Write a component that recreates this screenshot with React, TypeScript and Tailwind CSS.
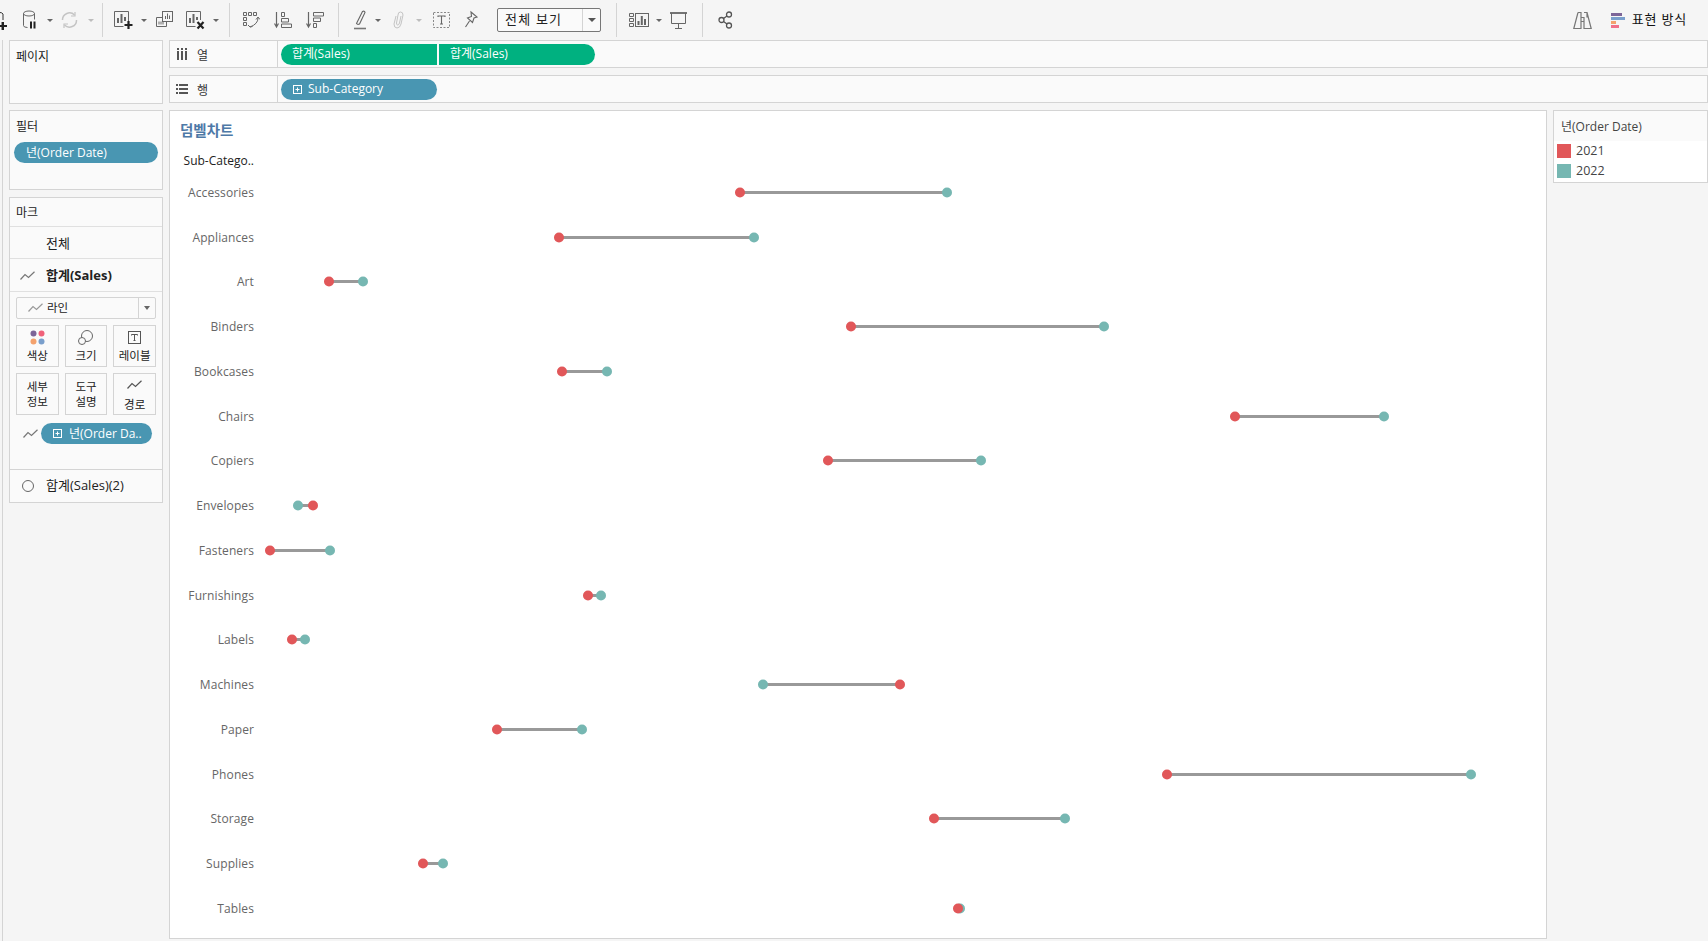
import type { ReactNode } from 'react';

const ROWS: { label: string; a: number; b: number }[] = [
  { label: 'Accessories', a: 740, b: 947 },
  { label: 'Appliances', a: 559, b: 754 },
  { label: 'Art', a: 329, b: 363 },
  { label: 'Binders', a: 851, b: 1104 },
  { label: 'Bookcases', a: 562, b: 607 },
  { label: 'Chairs', a: 1235, b: 1384 },
  { label: 'Copiers', a: 828, b: 981 },
  { label: 'Envelopes', a: 313, b: 298 },
  { label: 'Fasteners', a: 270, b: 330 },
  { label: 'Furnishings', a: 588, b: 601 },
  { label: 'Labels', a: 292, b: 305 },
  { label: 'Machines', a: 900, b: 763 },
  { label: 'Paper', a: 497, b: 582 },
  { label: 'Phones', a: 1167, b: 1471 },
  { label: 'Storage', a: 934, b: 1065 },
  { label: 'Supplies', a: 423, b: 443 },
  { label: 'Tables', a: 958, b: 960 },
];

const PLOT_LEFT = 255;

const Caret = ({ className = 'ml-[11px]', light = false }: { className?: string; light?: boolean }) => (
  <span
    className={`${className} h-0 w-0 border-x-[3px] border-t-[3px] border-x-transparent ${
      light ? 'border-t-[#bdbdbd]' : 'border-t-[#666666]'
    }`}
  />
);

const Sep = ({ className }: { className: string }) => <span className={`${className} h-[34px] w-px bg-[#d4d4d4]`} />;

const Ico = ({ w, h = 20, className = '', children }: { w: number; h?: number; className?: string; children: ReactNode }) => (
  <svg width={w} height={h} viewBox={`0 0 ${w} ${h}`} fill="none" stroke="#666" strokeWidth="1" className={`shrink-0 ${className}`}>
    {children}
  </svg>
);

const LineGlyph = ({ stroke = '#777' }: { stroke?: string }) => (
  <svg width="15" height="10" viewBox="0 0 15 10" fill="none" stroke={stroke} strokeWidth="1.2">
    <path d="M0.5 8.5 L5 3.5 L8.5 6.5 L14.5 0.8" />
  </svg>
);

const PlusBox = () => (
  <svg width="11" height="11" viewBox="0 0 11 11" fill="none" stroke="#fff" strokeWidth="1" className="shrink-0">
    <rect x="1.5" y="1.5" width="8" height="8" />
    <path d="M3.5 5.5h4M5.5 3.5v4" />
  </svg>
);

const Toolbar = () => (
  <div className="flex h-[40px] shrink-0 items-center bg-[#f5f5f5]">
    <div className="w-[7px] shrink-0 overflow-hidden">
      <Ico w={7} className="relative top-[1px]">
        <path d="M-5 3 Q1 0 3 3 V9 M-2 15h8M2 11v8" stroke="#333" />
        <path d="M-1 15h8M3 11v8" stroke="#222" strokeWidth="2" />
      </Ico>
    </div>
    <Ico w={13} h={20} className="ml-[16px]">
      <ellipse cx="6" cy="3.5" rx="5.5" ry="2.5" />
      <path d="M.5 3.5v12q0 2 4 2M11.5 3.5v6" />
      <path d="M8 11.5v7M11.5 11.5v7" stroke="#222" strokeWidth="2" />
    </Ico>
    <Caret className="ml-[11px]" />
    <Ico w={17} h={18} className="ml-[8px]">
      <path d="M1.5 9a7 7 0 0 1 12-5M15.5 9a7 7 0 0 1-12 5" stroke="#c4c4c4" strokeWidth="1.5" />
      <path d="M14 1v4h-4M3 17v-4h4" stroke="#c4c4c4" strokeWidth="1.2" />
    </Ico>
    <Caret className="ml-[10px]" light />
    <Sep className="ml-[8px]" />

    <Ico w={19} className="ml-[11px]">
      <path d="M14.5 12V1.5H.5v15h9" />
      <path d="M4 13V8M7.5 13V4M11 11V7" strokeWidth="2" />
      <path d="M14.5 11v8M10.5 15h8" stroke="#222" strokeWidth="2.2" />
    </Ico>
    <Caret className="ml-[8px]" />
    <Ico w={17} className="ml-[9px]">
      <rect x="6.5" y="1.5" width="10" height="10" />
      <path d="M9.5 9V6M11.5 9V3.5M13.5 9V5.5" />
      <path d="M6.5 7.5H.5v9h10v-5" />
      <path d="M3 14.5v-3M5 14.5v-3M7 14.5v-3" />
    </Ico>
    <Ico w={19} className="ml-[13px]">
      <path d="M14.5 10V1.5H.5v15h9" />
      <path d="M4 13V8M7.5 13V4M11 10V7" strokeWidth="2" />
      <path d="M11.5 12l6 6.5M17.5 12l-6 6.5" stroke="#222" strokeWidth="2.2" />
    </Ico>
    <Caret className="ml-[8px]" />
    <Sep className="ml-[10px]" />

    <Ico w={17} className="ml-[13px]">
      <path d="M.5 2.5h3v3h-3zM5.5 2.5h3v3h-3zM10.5 2.5h3v3h-3zM.5 7.5h3v3h-3zM.5 12.5h3v3h-3z" />
      <path d="M15 8q0 6-8 9M13 9.5l2-2.5 2 2.500M5 15l2 2 2.500-.5" />
    </Ico>
    <Ico w={18} className="ml-[14px]">
      <path d="M2.500 2v15M.5 13.500l2 3.500 2-3.500" strokeWidth="1.200" />
      <path d="M7.500 2.500h3v4h-3zM7.500 8.500h7v3.500h-7zM7.500 14h10v3.500h-10z" />
    </Ico>
    <Ico w={18} className="ml-[14px]">
      <path d="M2.500 2v15M.5 13.500l2 3.500 2-3.500" strokeWidth="1.200" />
      <path d="M7.500 2.500h10v3.500h-10zM7.500 8h7v3.500h-7zM7.500 13.500h3v4h-3z" />
    </Ico>
    <Sep className="ml-[14px]" />

    <Ico w={12} className="ml-[15px]">
      <path d="M3 12.500 L8.500 1.500q2-1 2.500 1L5.500 14q-2 1-3-.5z" strokeWidth="1.100" />
      <path d="M0 18.500h12" stroke="#777" strokeWidth="1.600" />
    </Ico>
    <Caret className="ml-[9px]" />
    <Ico w={12} className="ml-[11px]">
      <path d="M4 6L2 14q0 4 3 4t4-4l2-9q0-3-2.500-3T6 5L4.500 13q0 2 1.200 2T7.500 13l1.500-7" stroke="#c4c4c4" />
    </Ico>
    <Caret className="ml-[12px]" light />
    <Ico w={17} className="ml-[11px]">
      <rect x=".5" y="2.500" width="16" height="15" strokeDasharray="2 1.500" stroke="#888" />
      <path d="M5 7V6h7v1M8.500 6v8M7 14h3" strokeWidth="1.100" />
    </Ico>
    <Ico w={14} className="ml-[15px]">
      <path d="M6 2l6 5-3 1-1.500 4.500L2.500 8 6.500 6.500zM4.500 11L.5 17" strokeWidth="1.100" />
    </Ico>
    <div className="ml-[18px] flex h-[24px] w-[104px] shrink-0 items-center rounded-[2px] border border-[#777777] bg-[#fafafa]">
      <span className="flex-1 pl-[7px] text-[13px] tracking-[1.2px] text-[#222]">전체 보기</span>
      <span className="flex h-full w-[18px] items-center justify-center border-l border-[#d4d4d4]">
        <span className="h-0 w-0 border-x-[4px] border-t-[4px] border-x-transparent border-t-[#555]" />
      </span>
    </div>
    <Sep className="ml-[15px]" />

    <Ico w={20} className="ml-[12px]">
      <path d="M.5 3.500h4v3h-4zM.5 8.500h4v3h-4zM.5 13.500h4v3h-4z" />
      <rect x="6.500" y="3.500" width="13" height="13" />
      <path d="M9.500 15v-4M12.800 15V6M16 15v-6" strokeWidth="2" />
    </Ico>
    <Caret className="ml-[7px]" />
    <Ico w={17} className="ml-[8px]">
      <path d="M0 3h17" strokeWidth="1.800" />
      <path d="M1.500 3v10.500h14V3M8.500 13.500V18M5 18.500h7" />
    </Ico>
    <Sep className="ml-[15px]" />
    <Ico w={15} className="ml-[15px]">
      <g stroke="#555" strokeWidth="1.300">
        <circle cx="11" cy="4.500" r="2.500" />
        <circle cx="3.500" cy="10" r="2.500" />
        <circle cx="11" cy="15.500" r="2.500" />
        <path d="M5.500 8.500l3.500-2.500M5.500 11.500l3.500 2.500" />
      </g>
    </Ico>

    <div className="ml-auto flex items-center pr-[21px]">
      <Ico w={19} h={20}>
        <path d="M5 2.500h3v5M11 2.500h3v5M8 7.500h3v4H8M5 2.500L.8 18.500H8V7.500M14 2.500l4.200 16H11V7.500" strokeWidth="1.200" stroke="#777" />
      </Ico>
      <svg width="14" height="16" viewBox="0 0 14 16" className="ml-[19px] shrink-0">
        <rect x="0" y="1" width="11" height="3" fill="#7d6598" />
        <rect x="0" y="5" width="14" height="3" fill="#7a9fcc" />
        <rect x="0" y="9" width="5" height="3" fill="#f4a26e" />
        <rect x="0" y="13" width="8" height="3" fill="#f0708a" />
      </svg>
      <span className="ml-[7px] text-[13px] tracking-[0.8px] text-[#111]">표현 방식</span>
    </div>
  </div>
);

const Pill = ({ color, className, children }: { color: string; className: string; children: ReactNode }) => (
  <div className={`flex h-[21px] shrink-0 items-center text-[12px] text-white ${color} ${className}`}>{children}</div>
);

const Shelf = ({ icon, label, children }: { icon: ReactNode; label: string; children: ReactNode }) => (
  <div className="flex h-[28px] border border-[#d4d4d4] bg-[#fafafa]">
    <div className="flex w-[108px] shrink-0 items-center border-r border-[#d4d4d4] pl-[2px] text-[12px] text-[#333]">
      <span className="flex w-[19px] justify-center">{icon}</span>
      <span className="ml-[6px] pt-[3px]">{label}</span>
    </div>
    <div className="flex items-center pl-[3px]">{children}</div>
  </div>
);

const MarkCard = ({ icon, lines, dy = false }: { icon?: ReactNode; lines: string[]; dy?: boolean }) => (
  <div className="flex h-[42px] flex-col items-center justify-center border border-[#d4d4d4] bg-[#fafafa] text-[11.500px] leading-[15px] text-[#222]">
    {icon && <span className={`flex h-[17px] items-center ${dy ? 'mb-[3px]' : 'mb-[2px]'}`}>{icon}</span>}
    {lines.map((l) => (
      <span key={l}>{l}</span>
    ))}
  </div>
);

const Sidebar = () => (
  <div className="flex w-[154px] shrink-0 flex-col gap-[6px]">
    <div className="h-[64px] border border-[#d4d4d4] bg-[#fafafa] px-[6px] pt-[7px] text-[12px] text-[#222]">페이지</div>

    <div className="h-[80px] border border-[#d4d4d4] bg-[#fafafa] pt-[7px] text-[12px] text-[#222]">
      <div className="px-[6px]">필터</div>
      <Pill color="bg-[#4996b2]" className="mx-[4px] mt-[6px] w-[144px] rounded-full pl-[12px]">
        년(Order Date)
      </Pill>
    </div>

    <div className="mt-px flex h-[306px] flex-col border border-[#d4d4d4] bg-[#fafafa] text-[12px] text-[#222]">
      <div className="flex h-[29px] shrink-0 items-center border-b border-[#e0e0e0] px-[6px] pt-[2px]">마크</div>
      <div className="flex h-[32px] shrink-0 items-center border-b border-[#e0e0e0] pl-[36px] pt-[2px] text-[13px]">전체</div>
      <div className="flex h-[33px] shrink-0 items-center border-b border-[#e0e0e0] pl-[10px] pt-[2px] text-[13px] font-bold">
        <LineGlyph />
        <span className="ml-[11px]">합계(Sales)</span>
      </div>

      <div className="mx-[6px] mt-[5px] flex h-[22px] shrink-0 items-center rounded-[2px] border border-[#d4d4d4] bg-[#fafafa]">
        <span className="ml-[11px]">
          <LineGlyph stroke="#999" />
        </span>
        <span className="ml-[4px] flex-1 text-[11.500px]">라인</span>
        <span className="flex h-full w-[17px] items-center justify-center border-l border-[#d4d4d4]">
          <span className="h-0 w-0 border-x-[3.500px] border-t-[4px] border-x-transparent border-t-[#666]" />
        </span>
      </div>

      <div className="mx-[6px] mt-[6px] grid shrink-0 grid-cols-3 gap-x-[6px] gap-y-[6px]">
        <MarkCard
          lines={['색상']}
          icon={
            <svg width="15" height="15" viewBox="0 0 15 15">
              <circle cx="3.500" cy="3.500" r="3" fill="#7d6598" />
              <circle cx="11.500" cy="3.500" r="3" fill="#f0627a" />
              <circle cx="3.500" cy="11.500" r="3" fill="#f4a26e" />
              <circle cx="11.500" cy="11.500" r="3" fill="#7a9fcc" />
            </svg>
          }
        />
        <MarkCard
          lines={['크기']}
          icon={
            <svg width="15" height="15" viewBox="0 0 15 15" fill="none" stroke="#666">
              <circle cx="9" cy="6" r="5.500" />
              <circle cx="4" cy="11" r="3.500" fill="#fafafa" />
            </svg>
          }
        />
        <MarkCard
          lines={['레이블']}
          icon={
            <svg width="13" height="13" viewBox="0 0 13 13" fill="none" stroke="#555">
              <rect x=".5" y=".5" width="12" height="12" />
              <path d="M3.500 4.500v-1h6v1M6.500 3.500v6M5.500 9.500h2" />
            </svg>
          }
        />
        <MarkCard lines={['세부', '정보']} />
        <MarkCard lines={['도구', '설명']} />
        <MarkCard lines={['경로']} dy icon={<LineGlyph stroke="#555" />} />
      </div>

      <div className="mt-[8px] flex shrink-0 items-center pl-[13px]">
        <LineGlyph />
        <Pill color="bg-[#4996b2]" className="ml-[3px] w-[111px] gap-[6px] rounded-full pl-[11px]">
          <PlusBox />
          <span>년(Order Da..</span>
        </Pill>
      </div>

      <div className="mt-auto flex h-[33px] shrink-0 items-center border-t border-[#d4d4d4] pl-[12px] text-[13px]">
        <span className="h-[12px] w-[12px] rounded-full border border-[#666]" />
        <span className="ml-[12px]">합계(Sales)(2)</span>
      </div>
    </div>
  </div>
);

const DumbbellRow = ({ label, a, b }: { label: string; a: number; b: number }) => (
  <div className="flex h-[44.750px] items-center">
    <span className="w-[85px] shrink-0 pr-px text-right text-[12px] tracking-[0.1px] text-[#666]">{label}</span>
    <svg className="h-[20px] flex-1" viewBox="0 0 1291 20">
      <line x1={a - PLOT_LEFT} x2={b - PLOT_LEFT} y1="9.500" y2="9.500" stroke="#999999" strokeWidth="3" />
      <circle cx={b - PLOT_LEFT} cy="9.500" r="5" fill="#76b7b2" />
      <circle cx={a - PLOT_LEFT} cy="9.500" r="5" fill="#e15759" />
    </svg>
  </div>
);

const Chart = () => (
  <div className="flex h-[829px] min-w-0 flex-1 flex-col border border-[#d4d4d4] bg-white">
    <div className="h-[59.500px] shrink-0 pl-[10px]">
      <div className="pt-[9px] text-[14.500px] font-bold leading-[22px] text-[#4e79a7]">덤벨차트</div>
      <div className="mt-[11px] ml-[-9px] w-[84px] pr-px text-right text-[12px] font-medium leading-[16px] text-[#222]">
        Sub-Catego..
      </div>
    </div>
    {ROWS.map((row) => (
      <DumbbellRow key={row.label} {...row} />
    ))}
  </div>
);

const Legend = () => (
  <div className="h-[73px] w-[155px] shrink-0 border border-[#d4d4d4] bg-white text-[12px] text-[#444]">
    <div className="flex h-[30px] items-center bg-[#fafafa] pl-[7px] pt-[2px]">년(Order Date)</div>
    <div className="flex h-[20px] items-center pl-[3px]">
      <span className="h-[14px] w-[14px] bg-[#e15759]" />
      <span className="ml-[5px] text-[12.500px]">2021</span>
    </div>
    <div className="flex h-[20px] items-center pl-[3px]">
      <span className="h-[14px] w-[14px] bg-[#76b7b2]" />
      <span className="ml-[5px] text-[12.500px]">2022</span>
    </div>
  </div>
);

const App = () => {
  return (
    <div className="flex h-[941px] w-[1708px] flex-col overflow-hidden bg-[#f5f5f5] font-['Open_Sans','Noto_Sans_CJK_KR',sans-serif]">
      <Toolbar />
      <div className="flex flex-1">
        <div className="w-px shrink-0 translate-x-[2px] bg-[#d4d4d4]" />
        <div className="ml-[8px]">
          <Sidebar />
        </div>
        <div className="ml-[6px] flex min-w-0 flex-1 flex-col">
          <div className="flex flex-col gap-[7px]">
            <Shelf
              label="열"
              icon={
                <svg width="12" height="12" viewBox="0 0 12 12" fill="#555">
                  <rect x="1" y="3" width="2" height="9" />
                  <rect x="5" y="3" width="2" height="9" />
                  <rect x="9" y="3" width="2" height="9" />
                  <rect x="1" y="0" width="2" height="2" />
                  <rect x="5" y="0" width="2" height="2" />
                  <rect x="9" y="0" width="2" height="2" />
                </svg>
              }
            >
              <Pill color="bg-[#00b180]" className="w-[156px] rounded-l-full pl-[11px]">
                합계(Sales)
              </Pill>
              <Pill color="bg-[#00b180]" className="ml-[2px] w-[156px] rounded-r-full pl-[11px]">
                합계(Sales)
              </Pill>
            </Shelf>
            <Shelf
              label="행"
              icon={
                <svg width="12" height="12" viewBox="0 0 12 12" fill="#555">
                  <rect x="0" y="1" width="2" height="2" />
                  <rect x="3" y="1" width="9" height="2" />
                  <rect x="0" y="5" width="2" height="2" />
                  <rect x="3" y="5" width="9" height="2" />
                  <rect x="0" y="9" width="2" height="2" />
                  <rect x="3" y="9" width="9" height="2" />
                </svg>
              }
            >
              <Pill color="bg-[#4996b2]" className="w-[156px] gap-[5px] rounded-full pl-[11px]">
                <PlusBox />
                <span>Sub-Category</span>
              </Pill>
            </Shelf>
          </div>
          <div className="mt-[7px] flex gap-[6px]">
            <Chart />
            <Legend />
          </div>
        </div>
      </div>
    </div>
  );
};

export default App;
